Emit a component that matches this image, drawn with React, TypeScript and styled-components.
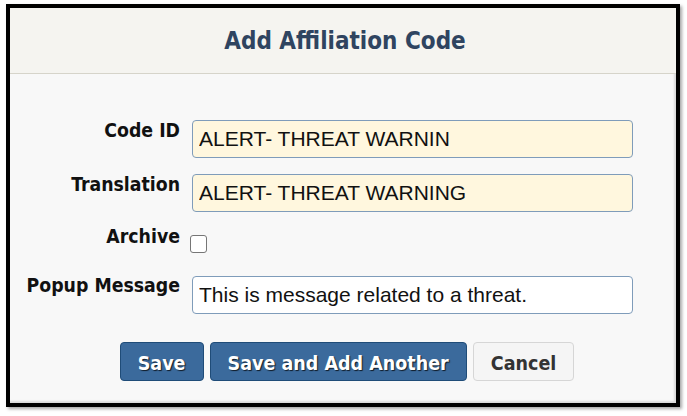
import React from "react";
import styled, { createGlobalStyle } from "styled-components";

const GlobalStyle = createGlobalStyle`
	html, body {
		margin: 0;
		padding: 0;
		background: #ffffff;
	}
	* {
		box-sizing: border-box;
	}
`;

const Page = styled.div`
	padding: 4px 0 0 6px;
	width: 687px;
	height: 416px;
`;

const Dialog = styled.div`
	width: 674px;
	height: 403px;
	border: 4px solid #000;
	background: #f8f8f8;
	display: flex;
	flex-direction: column;
	box-shadow: 2px 2px 3px rgba(0, 0, 0, 0.35), inset -2px -2px 2px rgba(0, 0, 0, 0.12);
`;

const Header = styled.header`
	height: 66px;
	background: #f5f4f0;
	border-bottom: 1px solid #d6d4ca;
	display: flex;
	align-items: center;
	justify-content: center;
`;

const Title = styled.h2`
	margin: 0 0 0 4px;
	font-family: "DejaVu Sans Condensed", "DejaVu Sans", sans-serif;
	font-stretch: condensed;
	font-weight: bold;
	font-size: 24px;
	color: #2f4460;
`;

const Body = styled.div`
	padding: 46px 0 0 10px;
	display: flex;
	flex-direction: column;
`;

const Row = styled.div<{ $top: number }>`
	display: grid;
	grid-template-columns: 160px 441px;
	column-gap: 12px;
	align-items: start;
	margin-top: ${(p) => p.$top}px;
`;

const Label = styled.label<{ $shift?: number }>`
	text-align: right;
	font-family: "DejaVu Sans Condensed", "DejaVu Sans", sans-serif;
	font-stretch: condensed;
	font-weight: bold;
	font-size: 19.3px;
	line-height: 22px;
	color: #111;
	margin-top: ${(p) => p.$shift ?? 0}px;
	white-space: nowrap;
`;

const TextInput = styled.input<{ $filled?: boolean }>`
	height: 38px;
	width: 441px;
	padding: 0 6px;
	border: 1px solid #7f9cba;
	border-radius: 4px;
	background: ${(p) => (p.$filled ? "#fff7de" : "#ffffff")};
	font-family: "Liberation Sans", Arial, sans-serif;
	font-size: 21px;
	color: #111;
	outline: none;
`;

const Check = styled.input`
	appearance: none;
	width: 17px;
	height: 18px;
	margin: 9px 0 0 -2px;
	border: 1.5px solid #767676;
	border-radius: 3px;
	background: #fff;
`;

const Actions = styled.div`
	margin-top: 28px;
	display: flex;
	justify-content: center;
	gap: 6px;
	padding-right: 2px;
`;

const Button = styled.button<{ $primary?: boolean }>`
	height: 39px;
	padding: 3px 17px 0;
	border-radius: 4px;
	border: 1px solid ${(p) => (p.$primary ? "#1f4c78" : "#d6d6d6")};
	background: ${(p) => (p.$primary ? "#3b6a9c" : "#f5f5f5")};
	color: ${(p) => (p.$primary ? "#ffffff" : "#333333")};
	text-shadow: ${(p) => (p.$primary ? "1px 1px 1px rgba(0, 0, 0, 0.75)" : "none")};
	font-family: "DejaVu Sans Condensed", "DejaVu Sans", sans-serif;
	font-stretch: condensed;
	font-weight: bold;
	font-size: 19.5px;
	cursor: pointer;
`;

export default function App() {
	return (
		<Page>
			<GlobalStyle />
			<Dialog>
				<Header>
					<Title>Add Affiliation Code</Title>
				</Header>
				<Body>
					<Row $top={0}>
						<Label>Code ID</Label>
						<TextInput $filled defaultValue="ALERT- THREAT WARNIN" />
					</Row>
					<Row $top={16}>
						<Label>Translation</Label>
						<TextInput $filled defaultValue="ALERT- THREAT WARNING" />
					</Row>
					<Row $top={14}>
						<Label>Archive</Label>
						<div>
							<Check type="checkbox" />
						</div>
					</Row>
					<Row $top={19}>
						<Label $shift={-1}>Popup Message</Label>
						<TextInput defaultValue="This is message related to a threat." />
					</Row>
					<Actions>
						<Button $primary>Save</Button>
						<Button $primary>Save and Add Another</Button>
						<Button>Cancel</Button>
					</Actions>
				</Body>
			</Dialog>
		</Page>
	);
}
